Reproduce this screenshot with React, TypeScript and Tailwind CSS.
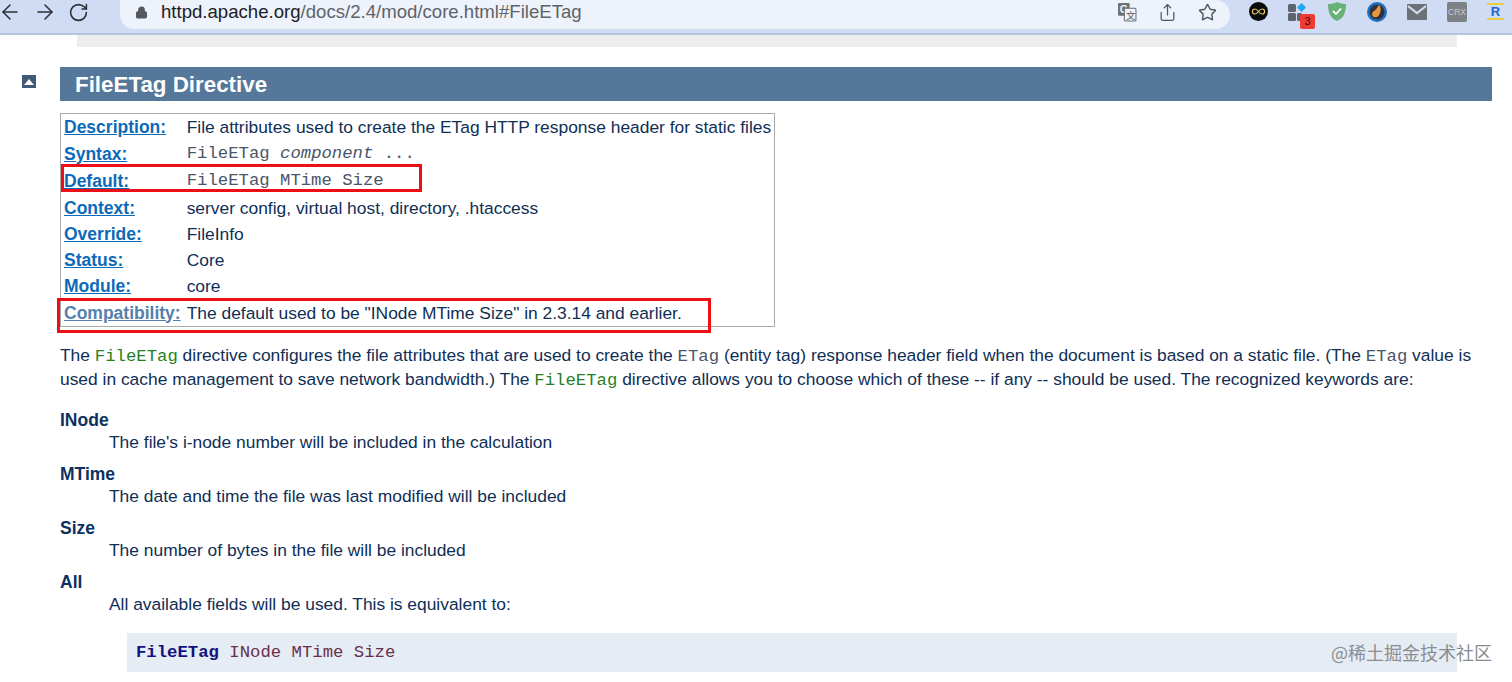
import { ArrowLeft, ArrowRight, RotateCw, Lock, Share, Star } from "lucide-react";

const sans = "font-['Liberation_Sans',Arial,sans-serif]";
const mono = "font-['Liberation_Mono','Courier_New',monospace]";

const rows = [
  { label: "Description:", h: "h-[26px]", value: "File attributes used to create the ETag HTTP response header for static files" },
  { label: "Syntax:", h: "h-[27px]", code: true, value: <>FileETag <i>component</i> ...</> },
  { label: "Default:", h: "h-[28px]", code: true, value: "FileETag MTime Size" },
  { label: "Context:", h: "h-[26px]", value: "server config, virtual host, directory, .htaccess" },
  { label: "Override:", h: "h-[26px]", value: "FileInfo" },
  { label: "Status:", h: "h-[26px]", value: "Core" },
  { label: "Module:", h: "h-[26px]", value: "core" },
  { label: "Compatibility:", h: "h-[27px]", muted: true, value: 'The default used to be "INode MTime Size" in 2.3.14 and earlier.' },
];

const keywords = [
  { term: "INode", text: "The file's i-node number will be included in the calculation" },
  { term: "MTime", text: "The date and time the file was last modified will be included" },
  { term: "Size", text: "The number of bytes in the file will be included" },
  { term: "All", text: "All available fields will be used. This is equivalent to:" },
];

const Code = ({ children, gray }: { children: React.ReactNode; gray?: boolean }) => (
  <code className={`${mono} text-[17.3px] leading-none ${gray ? "text-[#4a5568]" : "text-[#287f1f]"}`}>{children}</code>
);

const Toolbar = () => (
  <div className="h-[35px] bg-[#cfdcf3] border-b-2 border-[#b4c4dc] flex items-start overflow-hidden">
    <div className="flex items-center gap-[11px] w-[120px] text-[#2b2f36]">
      <ArrowLeft size={24} strokeWidth={1.5} className="-ml-[2px]" />
      <ArrowRight size={24} strokeWidth={1.5} />
      <RotateCw size={21} strokeWidth={1.8} />
    </div>
    <div className="w-[1110px] h-[29px] bg-[#edf2fb] rounded-r-[15px] rounded-bl-[15px] flex items-center pl-[15px] pb-[5px]">
      <Lock size={13} strokeWidth={2.4} className="text-[#55585e] fill-[#55585e]" />
      <span className={`${sans} ml-[13px] text-[18.6px] text-[#5f6368]`}>
        <span className="text-[#202124]">httpd.apache.org</span>/docs/2.4/mod/core.html#FileETag
      </span>
      <div className="ml-auto flex items-center gap-[21px] pr-[13px] text-[#54585e]">
        <svg width="20" height="20" viewBox="0 0 19 19">
          <rect x="1" y="1" width="11" height="12" rx="1" fill="#6c7076" />
          <text x="2.5" y="10.500" fontSize="10" fontWeight="700" fontFamily="Liberation Sans" fill="#edf2fb">G</text>
          <rect x="7" y="6" width="11" height="12" rx="1" fill="#edf2fb" stroke="#6c7076" />
          <text x="8.500" y="16" fontSize="9" fontFamily="Noto Sans CJK SC" fill="#55585e">文</text>
        </svg>
        <Share size={19} strokeWidth={1.6} />
        <Star size={19} strokeWidth={1.8} />
      </div>
    </div>
    <div className="flex items-center gap-[20px] pl-[19px] pt-[1px] h-[22px]">
      <svg width="19" height="19" viewBox="0 0 19 19" className="shrink-0">
        <circle cx="9.5" cy="9.5" r="9.5" fill="#0b0b0b" />
        <path d="M9.5 9.5c-1.5-2-2.5-2.5-3.6-2.5a2.5 2.5 0 000 5c1.100 0 2.100-.5 3.600-2.500s2.500-2.500 3.600-2.500a2.500 2.500 0 010 5c-1.100 0-2.100-.5-3.600-2.500z" fill="none" stroke="#e8c76a" strokeWidth="1.200" />
      </svg>
      <div className="relative w-[19px] h-[22px] shrink-0">
        <svg width="20" height="20" viewBox="0 0 20 20">
          <rect x="0" y="3" width="8" height="8" rx="1.500" fill="#5e6570" />
          <rect x="0" y="12" width="8" height="8" rx="1.500" fill="#5e6570" />
          <rect x="9" y="12" width="5" height="8" rx="1.500" fill="#5e6570" />
          <path d="M13.500 2l4.500 4.500-4.500 4.500-4.500-4.500z" fill="#1ea7f2" />
        </svg>
        <span className={`${sans} absolute left-[12px] top-[13px] w-[15px] h-[15px] bg-[#ef3b36] rounded-[2px] text-[11px] leading-[15px] text-center text-[#3a0a08]`}>3</span>
      </div>
      <svg width="20" height="21" viewBox="0 0 20 21" className="shrink-0">
        <path d="M10 1c3 1.500 6 2 9 2 0 8-2 14-9 17C3 17 1 11 1 3c3 0 6-.5 9-2z" fill="#67b279" />
        <path d="M6 10l3 3 5-5.500" fill="none" stroke="#fff" strokeWidth="1.800" />
      </svg>
      <svg width="20" height="20" viewBox="0 0 20 20" className="shrink-0">
        <circle cx="10" cy="10" r="10" fill="#1f6fc0" />
        <circle cx="10" cy="10" r="7.500" fill="#33333d" />
        <path d="M12 3c2 2 2 5 1 8s-3 5-6 4-2-5 0-6 3-3 5-6z" fill="#e8963c" />
      </svg>
      <svg width="20" height="16" viewBox="0 0 20 16" className="shrink-0">
        <rect width="20" height="16" rx="1" fill="#6d7075" />
        <path d="M1 2l9 7 9-7" fill="none" stroke="#cfdcf3" strokeWidth="2.200" />
      </svg>
      <div className={`${sans} shrink-0 w-[20px] h-[20px] bg-[#7d8085] rounded-[2px] text-[8.500px] leading-[20px] text-center text-[#c9ccd2]`}>CRX</div>
      <div className={`${sans} shrink-0 w-[17px] h-[17px] border-y-2 border-[#eccb45] text-[13px] leading-[13px] font-bold text-center text-[#2463d8]`}>R</div>
    </div>
  </div>
);

export default function App() {
  return (
    <div className={`${sans} relative h-[682px] w-[1512px] overflow-hidden bg-white text-[17.4px] text-[#0f2f56]`}>
      <Toolbar />
      <div className="mx-[77px] mr-[55px] h-[12px] bg-[#eeeeef]" />

      <main className="relative mt-[20px] ml-[60px] mr-[20px]">
        <a className="absolute left-[-38px] top-[8px] w-[14px] h-[13px] bg-[#405a78] flex items-center justify-center">
          <span className="w-0 h-0 border-x-[5px] border-x-transparent border-b-[6px] border-b-white" />
        </a>
        <h2 className="h-[34px] bg-[#557799] pl-[15px] text-[22.35px] leading-[35px] font-bold text-white">FileETag Directive</h2>

        <table className="mt-[12px] border border-[#a9a9a9] border-separate border-spacing-0 text-[#0f2f56]">
          <tbody>
            {rows.map((row) => (
              <tr key={row.label} className={row.h}>
                <th className="pl-[3px] pr-[6px] text-left font-bold whitespace-nowrap text-[17.5px] leading-[26px]">
                  <a className={`underline ${row.muted ? "text-[#5580ac]" : "text-[#0d6ab8]"}`}>{row.label}</a>
                </th>
                <td className={`pr-[3px] leading-[26px] whitespace-nowrap ${row.code ? `${mono} text-[17.3px] text-[#4a5568]` : ""}`}>
                  {row.value}
                </td>
              </tr>
            ))}
          </tbody>
        </table>

        <p className="mt-[16px] leading-[24px] w-[1420px]">
          The <Code>FileETag</Code> directive configures the file attributes that are used to create the{" "}
          <Code gray>ETag</Code> (entity tag) response header field when the document is based on a static file. (The{" "}
          <Code gray>ETag</Code> value is used in cache management to save network bandwidth.) The <Code>FileETag</Code>{" "}
          directive allows you to choose which of these -- if any -- should be used. The recognized keywords are:
        </p>

        <dl className="mt-[16px]">
          {keywords.map((k) => (
            <div key={k.term} className="h-[54px]">
              <dt className="text-[17.5px] leading-[27px] font-bold text-[#0c3260]">{k.term}</dt>
              <dd className="ml-[49px] leading-[17px]">{k.text}</dd>
            </div>
          ))}
        </dl>

        <pre className={`${mono} ml-[67px] mr-[35px] mt-[10px] h-[39px] bg-[#e5ecf3] pl-[9px] text-[17.3px] leading-[40px] text-[#6b2f4a]`}>
          <b className="text-[#12127f]">FileETag</b> INode MTime Size
        </pre>
      </main>

      {/* annotations drawn on top of the screenshot */}
      <div className="absolute left-[61px] top-[164px] w-[361px] h-[28px] border-[3px] border-[#ec0f16]" />
      <div className="absolute left-[57px] top-[298px] w-[654px] h-[35px] border-[3px] border-[#ec0f16]" />
      <div className="absolute left-[1331px] top-[641px] text-[18px] leading-[22px] text-[#8a8d93] font-['Noto_Sans_CJK_SC',sans-serif]">@稀土掘金技术社区</div>
    </div>
  );
}
